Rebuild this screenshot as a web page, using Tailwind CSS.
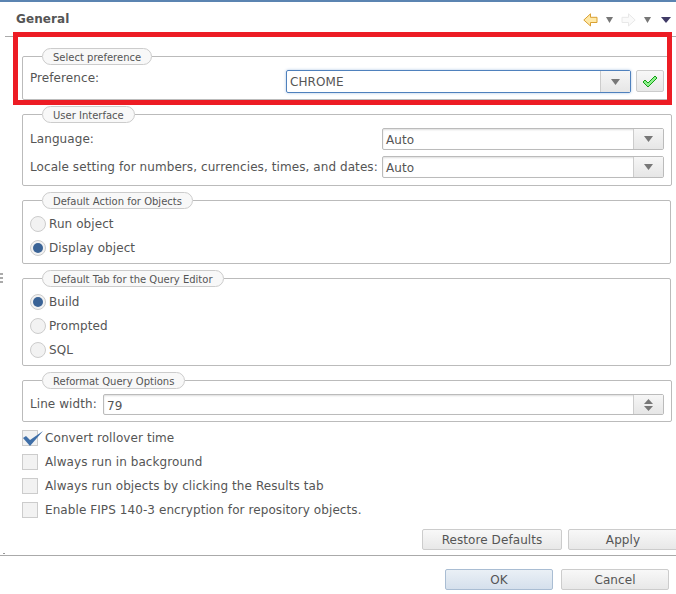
<!DOCTYPE html>
<html><head><meta charset="utf-8"><script src="https://cdn.jsdelivr.net/npm/@tailwindcss/browser@4"></script></head>
<body class="m-0 bg-white">
<div class="relative w-[676px] h-[594px] overflow-hidden bg-white text-[#555] text-[12px] tracking-[0.08px] font-['DejaVu_Sans',sans-serif] leading-4">
  <div class="h-[2px] bg-[#5b84b1]"></div>
  <header class="h-[35px] ml-[5px] border-b border-[#aaa] flex items-center justify-between pl-[11px] pr-[5px] pt-[1px]">
    <h1 class="font-bold text-[12px] text-[#555] -mt-[2px]">General</h1>
    <div class="flex items-center">
      <svg width="15" height="14" viewBox="0 0 15 14"><path d="M7.500 .8 .8 7l6.700 6V9.500h6.500V4.300H7.500z" fill="#ffe9a8" stroke="#d9a033"/></svg>
      <svg class="ml-[8px]" width="7" height="6" viewBox="0 0 7 6"><path d="M0 0h7L3.500 6z" fill="#777"/></svg>
      <svg class="ml-[8px]" width="15" height="14" viewBox="0 0 15 14"><path d="M7.500 .8 14.200 7l-6.700 6V9.500H1V4.300h6.500z" fill="#fafafa" stroke="#e8e8e8"/></svg>
      <svg class="ml-[8px]" width="7" height="6" viewBox="0 0 7 6"><path d="M0 0h7L3.500 6z" fill="#777"/></svg>
      <svg class="ml-[10px]" width="10" height="6" viewBox="0 0 10 6"><path d="M0 0h10L5 6z" fill="#3f3a66"/></svg>
    </div>
  </header>
  <main class="pl-[22px] pr-[5px] pt-[11px]">
    <fieldset class="h-[52px] mb-[6px] border border-[#bbb] rounded-[2px] px-[7px]">
      <legend class="ml-[12px] h-[17px] px-[10px] rounded-full border border-[#ccc] bg-[#f8f8f8] text-[10px] tracking-normal leading-[17px] text-[#555]">Select preference</legend>
      <div class="flex items-start">
        <span class="w-[256px] mt-[5px]">Preference:</span>
        <div class="w-[345px] h-[23px] mt-[5px] flex border border-[#4f81bd] rounded-[2px] shadow-[0_0_3px_#a9c3e3]">
          <span class="flex-1 pl-[3px] pt-[3px] text-[#555]">CHROME</span>
          <span class="w-[30px] border-l border-[#ccc] bg-gradient-to-b from-[#f6f6f6] to-[#e6e6e6] flex items-center justify-center"><svg width="9" height="6" viewBox="0 0 9 6"><path d="M0 0h9L4.500 6z" fill="#777"/></svg></span>
        </div>
        <button class="ml-[5px] mt-[5px] w-[28px] h-[22px] border border-[#ccc] rounded-[2px] bg-gradient-to-b from-[#f8f8f8] to-[#e8e8e8] flex items-center justify-center"><svg width="16" height="13" viewBox="0 0 16 13"><path d="M1 7 3 5 6 8 13 1 15 3 6 12z" fill="#8ef08e" stroke="#12a012"/></svg></button>
      </div>
    </fieldset>
    <fieldset class="h-[80px] mb-[6px] border border-[#bbb] rounded-[2px] px-[7px]">
      <legend class="ml-[12px] h-[17px] px-[10px] rounded-full border border-[#ccc] bg-[#f8f8f8] text-[10px] tracking-normal leading-[17px]">User Interface</legend>
      <div class="grid grid-cols-[352px_282px] grid-rows-[22px_22px] gap-y-[6px] mt-[5px] items-center">
        <span class="-mt-[1px]">Language:</span>
        <div class="h-[22px] flex border border-[#bbb] rounded-[2px] shadow-[inset_0_1px_2px_#ddd]"><span class="flex-1 pl-[3px] pt-[3px]">Auto</span><span class="w-[30px] border-l border-[#ccc] bg-gradient-to-b from-[#f6f6f6] to-[#e6e6e6] flex items-center justify-center"><svg width="9" height="6" viewBox="0 0 9 6"><path d="M0 0h9L4.500 6z" fill="#777"/></svg></span></div>
        <span class="-mt-[1px] whitespace-nowrap">Locale setting for numbers, currencies, times, and dates:</span>
        <div class="h-[22px] flex border border-[#bbb] rounded-[2px] shadow-[inset_0_1px_2px_#ddd]"><span class="flex-1 pl-[3px] pt-[3px]">Auto</span><span class="w-[30px] border-l border-[#ccc] bg-gradient-to-b from-[#f6f6f6] to-[#e6e6e6] flex items-center justify-center"><svg width="9" height="6" viewBox="0 0 9 6"><path d="M0 0h9L4.500 6z" fill="#777"/></svg></span></div>
      </div>
    </fieldset>
    <fieldset class="h-[72px] mb-[6px] border border-[#bbb] rounded-[2px] px-[7px]">
      <legend class="ml-[12px] h-[17px] px-[10px] rounded-full border border-[#ccc] bg-[#f8f8f8] text-[10px] tracking-normal leading-[17px]">Default Action for Objects</legend>
      <div class="flex items-center h-[24px] mt-[3px] gap-[3px]"><span class="w-4 h-4 rounded-full border border-[#ccc] bg-[#f2f2f2]"></span>Run object</div>
      <div class="flex items-center h-[24px] gap-[3px]"><span class="w-4 h-4 rounded-full border border-[#ccc] bg-[#f2f2f2] flex items-center justify-center"><span class="w-[10px] h-[10px] rounded-full bg-[#3a6396]"></span></span>Display object</div>
    </fieldset>
    <fieldset class="h-[96px] mb-[6px] border border-[#bbb] rounded-[2px] px-[7px]">
      <legend class="ml-[12px] h-[17px] px-[10px] rounded-full border border-[#ccc] bg-[#f8f8f8] text-[10px] tracking-normal leading-[17px]">Default Tab for the Query Editor</legend>
      <div class="flex items-center h-[24px] mt-[3px] gap-[3px]"><span class="w-4 h-4 rounded-full border border-[#ccc] bg-[#f2f2f2] flex items-center justify-center"><span class="w-[10px] h-[10px] rounded-full bg-[#3a6396]"></span></span>Build</div>
      <div class="flex items-center h-[24px] gap-[3px]"><span class="w-4 h-4 rounded-full border border-[#ccc] bg-[#f2f2f2]"></span>Prompted</div>
      <div class="flex items-center h-[24px] gap-[3px]"><span class="w-4 h-4 rounded-full border border-[#ccc] bg-[#f2f2f2]"></span>SQL</div>
    </fieldset>
    <fieldset class="h-[50px] border border-[#bbb] rounded-[2px] px-[7px]">
      <legend class="ml-[12px] h-[17px] px-[10px] rounded-full border border-[#ccc] bg-[#f8f8f8] text-[10px] tracking-normal leading-[17px]">Reformat Query Options</legend>
      <div class="flex items-center mt-[5px]">
        <span class="w-[73px] -mt-[2px]">Line width:</span>
        <div class="w-[561px] h-[21px] flex border border-[#bbb] rounded-[2px] shadow-[inset_0_1px_2px_#ddd]"><span class="flex-1 pl-[3px] pt-[3px]">79</span><span class="w-[30px] border-l border-[#ccc] bg-gradient-to-b from-[#f6f6f6] to-[#e6e6e6] flex flex-col items-center justify-center gap-[2px]"><svg width="9" height="5" viewBox="0 0 9 5"><path d="M0 5h9L4.500 0z" fill="#777"/></svg><svg width="9" height="5" viewBox="0 0 9 5"><path d="M0 0h9L4.500 5z" fill="#777"/></svg></span></div>
      </div>
    </fieldset>
    <div class="mt-[4px]">
      <div class="flex items-center h-[24px] gap-[7px]"><span class="relative w-4 h-4 border border-[#ccc] bg-[#f2f2f2]"><svg class="absolute top-0 left-0" width="21" height="16" viewBox="0 0 21 16"><path d="M0 7 3 5 7 9 20 0 7 15z" fill="#3f6fa8"/></svg></span>Convert rollover time</div>
      <div class="flex items-center h-[24px] gap-[7px]"><span class="w-4 h-4 border border-[#ccc] bg-[#f2f2f2]"></span>Always run in background</div>
      <div class="flex items-center h-[24px] gap-[7px]"><span class="w-4 h-4 border border-[#ccc] bg-[#f2f2f2]"></span>Always run objects by clicking the Results tab</div>
      <div class="flex items-center h-[24px] gap-[7px]"><span class="w-4 h-4 border border-[#ccc] bg-[#f2f2f2]"></span>Enable FIPS 140-3 encryption for repository objects.</div>
    </div>
  </main>
  <div class="flex ml-[422px] mt-[7px] gap-[6px]">
    <button class="w-[140px] h-[21px] shrink-0 border border-[#ccc] rounded-[2px] bg-gradient-to-b from-[#f8f8f8] to-[#e8e8e8] text-[#555]">Restore Defaults</button>
    <button class="w-[110px] h-[21px] shrink-0 border border-[#ccc] rounded-[2px] bg-gradient-to-b from-[#f8f8f8] to-[#e8e8e8] text-[#555]">Apply</button>
  </div>
  <footer class="mt-[5px] border-t border-[#aaa] flex justify-end gap-[8px] pt-[13px] pr-[7px]">
    <button class="w-[108px] h-[21px] border border-[#a9bdd3] rounded-[2px] bg-gradient-to-b from-[#eaf0f6] to-[#d5e0ec] text-[#555]">OK</button>
    <button class="w-[108px] h-[21px] border border-[#ccc] rounded-[2px] bg-gradient-to-b from-[#f8f8f8] to-[#e8e8e8] text-[#555]">Cancel</button>
  </footer>
  <div class="absolute left-0 top-[273px] w-[3px] h-[10px] bg-[repeating-linear-gradient(#aaa_0_2px,transparent_2px_4px)]"></div>
  <div class="absolute left-[3px] top-[553px] w-[2px] h-[1px] bg-[#999]"></div>
  <div class="absolute left-[13px] top-[32px] w-[659px] h-[73px] border-[5px] border-[#ed1c24]"></div>
</div>
</body></html>
